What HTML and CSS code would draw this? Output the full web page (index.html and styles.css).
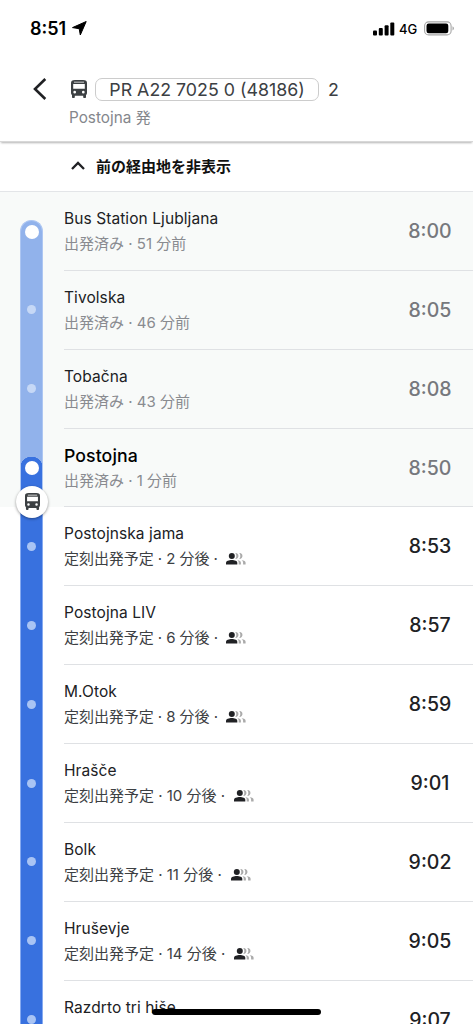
FILE: index.html
```html
<!DOCTYPE html>
<html lang="ja">
<head>
<meta charset="utf-8">
<title>Postojna</title>
<link rel="stylesheet" href="styles.css">
</head>
<body>
<svg class="defs" width="0" height="0">
  <symbol id="bus" viewBox="0 0 16 18"><path fill="currentColor" fill-rule="evenodd" d="M4 0h8c3 0 4 1 4 3v10c0 .9-.4 1.600-1 2v2c0 .6-.4 1-1 1h-.8c-.6 0-1-.4-1-1v-1.200H3.800V17c0 .6-.4 1-1 1H2c-.6 0-1-.4-1-1v-2c-.6-.4-1-1.100-1-2V3c0-2 1-3 4-3zM2.200 4v4.700h11.600V4zM3 1.800h10V2.600H3zM3.700 10.800a1.350 1.350 0 1 0 0 2.700 1.350 1.350 0 0 0 0-2.700zM12.300 10.800a1.350 1.350 0 1 0 0 2.700 1.350 1.350 0 0 0 0-2.700z"/></symbol>
  <symbol id="crowd" viewBox="0 0 20 12"><circle cx="5.800" cy="3" r="3" fill="#202124"/><path fill="#202124" d="M0 11.500V9.700C0 7.900 3 6.900 5.800 6.900s5.500 1 5.500 2.800v1.800z"/><path fill="#aaa" d="M9.300 0c4.200-.2 4.200 6 0 5.900 1.400-1.800 1.400-4.100 0-5.900zM13.300 0c4.200-.2 4.200 6 0 5.900 1.400-1.800 1.400-4.100 0-5.900zM11.200 7.100c2.600.4 3.700 1.300 3.700 2.700v1.700h-2.200V9.800c0-1.100-.5-2-1.500-2.700zM15.400 7.100c2.900.4 4.200 1.300 4.200 2.700v1.700h-2.500V9.800c0-1.100-.5-2-1.700-2.700z"/></symbol>
</svg>
<div class="screen">
  <div class="status">
    <span class="clock">8:51</span>
    <svg class="loc" width="15" height="15" viewBox="0 0 15 15"><path d="M14.200.5 8.300 14 7.200 7.700.5 6.600z" stroke="#000" stroke-linejoin="round"/></svg>
    <svg class="signal" width="22" height="14" viewBox="0 0 22 14"><rect y="8.500" width="4" height="5" rx="1"/><rect x="5.800" y="6" width="4" height="7.500" rx="1"/><rect x="11.600" y="3.300" width="4" height="10.200" rx="1"/><rect x="17.300" y=".5" width="4" height="13" rx="1"/></svg>
    <span class="net">4G</span>
    <svg class="battery" width="31" height="15" viewBox="0 0 31 15"><rect x=".6" y=".9" width="26.500" height="13" rx="4" fill="none" stroke="#a6a6a6" stroke-width="1.100"/><rect x="2.500" y="2.600" width="21.800" height="9.600" rx="2.200"/><path fill="#a6a6a6" d="M28.500 5.300c2 .8 2 3.400 0 4.200z"/></svg>
  </div>
  <header class="header">
    <svg class="back" width="14" height="22" viewBox="0 0 14 22"><path d="M12.300 1 2 11l10.300 10" fill="none" stroke="#202124" stroke-width="2.600"/></svg>
    <div class="route">
      <div class="line">
        <svg class="line-bus" width="16" height="18"><use href="#bus"/></svg>
        <span class="pill"><span>PR A22 7025 0 (48186)</span></span>
        <span class="dest">2</span>
      </div>
      <div class="from">Postojna 発</div>
    </div>
  </header>
  <div class="toggle">
    <svg width="14" height="9" viewBox="0 0 14 9"><path d="M1 8l6-6 6 6" fill="none" stroke="#202124" stroke-width="2.300"/></svg>
    <span>前の経由地を非表示</span>
  </div>
  <ul class="stops">
    <li class="stop past first"><div class="rail"><i class="dot big"></i></div><div class="body"><div class="text"><b class="name">Bus Station Ljubljana</b><span class="sub">出発済み · 51 分前</span></div><time>8:00</time></div></li>
    <li class="stop past"><div class="rail"><i class="dot"></i></div><div class="body"><div class="text"><b class="name">Tivolska</b><span class="sub">出発済み · 46 分前</span></div><time>8:05</time></div></li>
    <li class="stop past"><div class="rail"><i class="dot"></i></div><div class="body"><div class="text"><b class="name">Tobačna</b><span class="sub">出発済み · 43 分前</span></div><time>8:08</time></div></li>
    <li class="stop past current"><div class="rail"><i class="dot big"></i></div><div class="body"><div class="text"><b class="name">Postojna</b><span class="sub">出発済み · 1 分前</span></div><time>8:50</time></div><span class="badge"><svg width="15" height="17"><use href="#bus"/></svg></span></li>
    <li class="stop soon"><div class="rail"><i class="dot"></i></div><div class="body"><div class="text"><b class="name">Postojnska jama</b><span class="sub">定刻出発予定 · 2 分後 ·<svg class="crowd"><use href="#crowd"/></svg></span></div><time>8:53</time></div></li>
    <li class="stop soon"><div class="rail"><i class="dot"></i></div><div class="body"><div class="text"><b class="name">Postojna LIV</b><span class="sub">定刻出発予定 · 6 分後 ·<svg class="crowd"><use href="#crowd"/></svg></span></div><time>8:57</time></div></li>
    <li class="stop soon"><div class="rail"><i class="dot"></i></div><div class="body"><div class="text"><b class="name">M.Otok</b><span class="sub">定刻出発予定 · 8 分後 ·<svg class="crowd"><use href="#crowd"/></svg></span></div><time>8:59</time></div></li>
    <li class="stop"><div class="rail"><i class="dot"></i></div><div class="body"><div class="text"><b class="name">Hrašče</b><span class="sub">定刻出発予定 · 10 分後 ·<svg class="crowd"><use href="#crowd"/></svg></span></div><time>9:01</time></div></li>
    <li class="stop"><div class="rail"><i class="dot"></i></div><div class="body"><div class="text"><b class="name">Bolk</b><span class="sub">定刻出発予定 · 11 分後 ·<svg class="crowd"><use href="#crowd"/></svg></span></div><time>9:02</time></div></li>
    <li class="stop"><div class="rail"><i class="dot"></i></div><div class="body"><div class="text"><b class="name">Hruševje</b><span class="sub">定刻出発予定 · 14 分後 ·<svg class="crowd"><use href="#crowd"/></svg></span></div><time>9:05</time></div></li>
    <li class="stop"><div class="rail"><i class="dot"></i></div><div class="body"><div class="text"><b class="name">Razdrto tri hiše</b></div><time>9:07</time></div></li>
  </ul>
  <div class="home"></div>
</div>
</body>
</html>
```
FILE: styles.css
```css
* { box-sizing: border-box; }
body { margin: 0; background: #fff; color: #202124; font-family: Inter, "Noto Sans CJK JP", sans-serif; }
svg { display: block; flex: none; }
.defs { position: absolute; }
.screen { position: relative; width: 473px; height: 1024px; overflow: hidden; display: flex; flex-direction: column; }
.status { height: 57px; flex: none; display: flex; align-items: center; padding-left: 30px; color: #000; }
.clock { width: 37px; font-size: 18px; font-weight: 600; letter-spacing: 0; white-space: nowrap; }
.loc { margin-left: 5px; }
.signal { margin-left: 286px; }
.net { width: 20px; margin-left: 4px; font-size: 13px; font-weight: 500; }
.battery { margin-left: 5px; }
.header { position: relative; z-index: 1; height: 85px; flex: none; display: flex; padding: 20px 0 0 33px; background: #fff; border-bottom: 1px solid #d8d8d8; box-shadow: 0 2px 2px -1px rgba(0,0,0,.3); }
.back { margin-top: 1px; }
.route { padding-left: 22px; }
.line { display: flex; align-items: center; height: 24px; padding-left: 2px; font-size: 17.800px; color: #3c4043; }
.line-bus { color: #3c4043; margin-top: -1px; }
.pill { width: 224px; height: 23px; margin-left: 8px; border: 1px solid #ccc; border-radius: 7px; display: flex; align-items: center; justify-content: center; white-space: nowrap; }
.dest { margin-left: 9px; }
.from { line-height: 20px; margin-top: 7px; font-size: 15.300px; color: #85878c; }
.toggle { height: 50px; flex: none; display: flex; align-items: center; gap: 11px; padding: 0 0 2px 71px; border-bottom: 1px solid #e3e5e8; font-size: 15px; font-weight: 700; color: #111; }
.stops { margin: 0; padding: 0; list-style: none; }
.stop { position: relative; height: 78.870px; display: flex; }
.past { background: #f8faf9; }
.rail { width: 23px; margin-left: 20px; flex: none; display: flex; justify-content: center; background: #3871df; border: solid #86aaf0; border-width: 0 1px; padding-top: 34.500px; }
.past .rail { background: #91b2eb; border-color: #adc6f2; }
.dot { width: 9px; height: 9px; border-radius: 50%; background: #a9c4f4; }
.past .dot { background: #c6d8f6; }
.past .dot.big { width: 14px; height: 14px; background: #fff; }
.past.first .rail { margin-top: 27.500px; padding-top: 4px; border-radius: 12px 12px 0 0; border-top-width: 1px; }
.past.current .rail { padding-top: 32px; background: radial-gradient(circle 11.500px at 50% 39px, #3871df 97%, #91b2eb 100%) 0 0 / 100% 39px no-repeat, #3871df; }
.body { flex: 1; margin-left: 21px; display: flex; justify-content: space-between; border-bottom: 1px solid #dfe1e4; padding-right: 18px; }
.text { padding-top: 17px; }
.name { display: block; font-size: 15.500px; line-height: 20px; font-weight: 400; letter-spacing: .08px; white-space: nowrap; }
.current .name { font-size: 17.700px; font-weight: 500; color: #000; }
.sub { display: flex; align-items: center; height: 20px; margin-top: 5px; line-height: 20px; font-size: 15px; color: #3c4043; white-space: nowrap; }
.past .sub { color: #898b90; }
.crowd { width: 20px; height: 12px; margin-left: 9px; }
.soon .sub { letter-spacing: -.06px; }
.soon .crowd { margin-left: 8px; }
time { width: 50px; text-align: center; padding-top: 27px; line-height: 25px; font-size: 19.500px; font-weight: 500; }
.past time { color: #76787d; }
.badge { position: absolute; z-index: 1; left: 16px; top: 57px; width: 32px; height: 32px; border-radius: 50%; background: #fff; color: #3c4043; display: flex; align-items: center; justify-content: center; box-shadow: 0 1px 3px rgba(0,0,0,.4); }
.home { position: absolute; left: 152px; top: 1009px; width: 169px; height: 6px; border-radius: 3px; background: #000; }
```
